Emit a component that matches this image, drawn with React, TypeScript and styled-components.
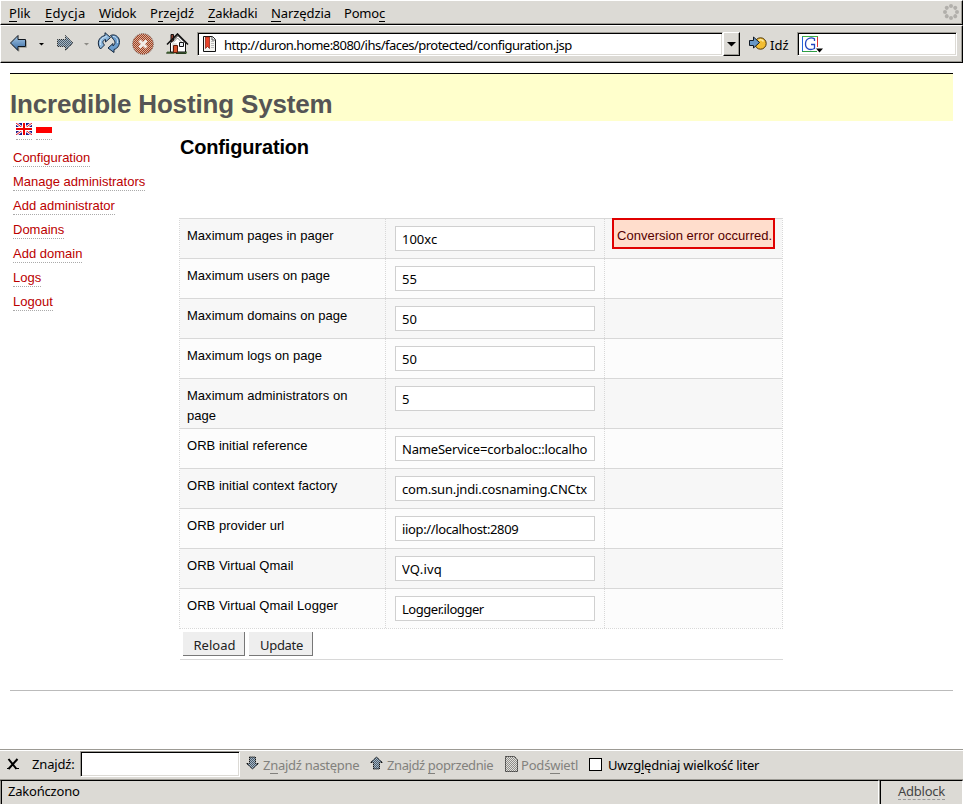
import React from 'react';
import styled, { createGlobalStyle, css } from 'styled-components';

const UI = '"Noto Sans", "Open Sans", sans-serif';
const WEB = '"Liberation Sans", Arial, sans-serif';
const FACE = '#dcdad5';
const SHADE = '#9c9a94';

const GlobalStyle = createGlobalStyle`
  *, *::before, *::after { box-sizing: border-box; }
  body { margin: 0; background: #fff; color: #000; }
  #root { height: 804px; }
  svg { display: block; flex: none; }
`;

const Window = styled.div`
  width: 963px;
  height: 804px;
  display: flex;
  flex-direction: column;
  overflow: hidden;
  font: 13px/18px ${UI};
  white-space: nowrap;
`;

const Label = styled.span<{ $track?: number }>`
  letter-spacing: ${(p) => p.$track ?? 0}px;
  white-space: pre;
`;

const Key = styled.span`
  box-shadow: 0 1px 0 currentColor;
  display: inline-block;
  height: 17px;
  line-height: 18px;
  vertical-align: top;
`;

const sunken = css`
  background: #fff;
  border: 1px solid;
  border-color: ${SHADE} #fff #fff ${SHADE};
  box-shadow: inset 1px 1px 0 #000, inset -1px -1px 0 ${FACE};
`;

/* Browser chrome, top */

const MenuBar = styled.div`
  height: 25px;
  flex: none;
  display: flex;
  padding: 3px 3px 0 8px;
  background: ${FACE};
  border: 1px solid;
  border-color: #fff #000 #000 #fff;
  box-shadow: inset -1px -1px 0 ${SHADE};
`;

const MenuItem = styled.div<{ $width: number }>`
  width: ${(p) => p.$width}px;
`;

const ThrobberSlot = styled.div`
  margin: 0 0 0 auto;
`;

const NavBar = styled.div`
  height: 38px;
  flex: none;
  display: flex;
  align-items: flex-start;
  padding-top: 6px;
  background: ${FACE};
  border: 1px solid;
  border-color: #fff #000 #000 #fff;
  box-shadow: inset -1px -1px 0 ${SHADE};
`;

const IconSlot = styled.div<{ $width: number; $top?: number; $left?: number }>`
  width: ${(p) => p.$width}px;
  flex: none;
  padding: ${(p) => p.$top ?? 0}px 0 0 ${(p) => p.$left ?? 0}px;
`;

const AddressField = styled.div`
  ${sunken}
  width: 526px;
  height: 24px;
  flex: none;
  display: flex;
  padding: 3px 0 0 5px;
  gap: 7px;
`;

const DropButton = styled.div`
  width: 17px;
  height: 24px;
  flex: none;
  background: ${FACE};
  border: 1px solid;
  border-color: #fff #000 #000 #fff;
  box-shadow: inset -1px -1px 0 ${SHADE};
  display: flex;
  align-items: center;
  justify-content: center;
`;

const GoButton = styled.div`
  width: 57px;
  flex: none;
  display: flex;
  gap: 3px;
  padding: 4px 0 0 9px;
`;

const SearchField = styled.div`
  ${sunken}
  width: 160px;
  height: 24px;
  padding: 3px 0 0 4px;
`;

/* Page */

const Page = styled.main`
  flex: 1;
  padding: 10px 10px 0;
  font: 13px/20px ${WEB};
`;

const Banner = styled.h1`
  margin: 0;
  height: 48px;
  padding-top: 15px;
  background: #ffc;
  border-top: 1px solid #000;
  color: #555;
  font: bold 26px/30px ${WEB};
  letter-spacing: -0.16px;
`;

const Columns = styled.div`
  display: flex;
  align-items: flex-start;
  height: 569px;
`;

const Sidebar = styled.nav`
  width: 169px;
  flex: none;
  padding: 2px 0 0 3px;
`;

const Flags = styled.div`
  display: flex;
  gap: 4px;
  padding-left: 3px;
  height: 20px;
`;

const FlagLink = styled.a`
  height: 17px;
  border-bottom: 1px dotted #aaa;
`;

const NavItem = styled.div`
  height: 24px;
  display: flex;
  align-items: flex-end;
`;

const NavLink = styled.a`
  height: 19px;
  line-height: 19px;
  color: #b00;
  border-bottom: 1px dotted #aaa;
`;

const Main = styled.section`
  width: 604px;
`;

const Title = styled.h2`
  margin: 0;
  padding: 14px 0 0 1px;
  height: 97px;
  font: bold 20px/24px ${WEB};
  letter-spacing: -0.17px;
`;

const Form = styled.div`
  border: dotted #d8d8d8;
  border-width: 0 1px 1px 1px;
`;

const Row = styled.div<{ $alt: boolean; $tall?: boolean }>`
  display: grid;
  grid-template-columns: 206px 219px 1fr;
  height: ${(p) => (p.$tall ? 50 : 40)}px;
  margin: 0 -1px;
  padding: 0 1px;
  border-top: 1px solid #d8d8d8;
  background: ${(p) => (p.$alt ? '#fcfcfc' : '#f7f7f7')};
  background-clip: content-box;
  white-space: normal;
`;

const Cell = styled.div<{ $kind: 'label' | 'field' | 'message' }>`
  ${(p) => p.$kind !== 'message' && 'border-right: 1px dotted #d8d8d8;'}
  padding: ${(p) => (p.$kind === 'label' ? '7px 20px 0 7px' : p.$kind === 'field' ? '7px 9px 0' : '0 0 0 7px')};
  letter-spacing: ${(p) => (p.$kind === 'label' ? 0.03 : 0)}px;
`;

const Field = styled.input<{ $track: number }>`
  display: block;
  width: 200px;
  height: 25px;
  border: 1px solid #d0d0d0;
  border-radius: 0;
  outline: 0;
  background: #fff;
  color: #000;
  padding: 1px 6px 0;
  font: 13px/18px ${UI};
  letter-spacing: ${(p) => p.$track}px;
`;

const ErrorBox = styled.div`
  width: 163px;
  height: 31px;
  margin-top: -1px;
  padding: 6px 0 0 3px;
  border: 2px solid #e00000;
  background: #fdc;
  color: #500;
  line-height: 20px;
  letter-spacing: 0.02px;
  white-space: nowrap;
`;

const Actions = styled.div`
  display: flex;
  gap: 4px;
  height: 31px;
  margin-left: 1px;
  padding: 3px 0 0 3px;
  border-bottom: 1px solid #d8d8d8;
`;

const ActionButton = styled.button<{ $width: number }>`
  width: ${(p) => p.$width}px;
  height: 24px;
  padding: 2px 0 0 2px;
  border: solid #777;
  border-width: 0 1px 1px 0;
  border-radius: 0;
  background: #eee;
  color: #222;
  font: 13px/18px ${UI};
`;

const FooterRule = styled.div`
  border-top: 1px solid #bbb;
`;

/* Browser chrome, bottom */

const FindBar = styled.div`
  height: 31px;
  flex: none;
  display: flex;
  border-top: 1px solid ${SHADE};
  border-bottom: 1px solid ${SHADE};
  background: ${FACE};
  box-shadow: inset 0 1px 0 #fff;
  padding-top: 1px;
`;

const FindLabel = styled.div`
  width: 48px;
  padding-top: 4px;
  letter-spacing: -0.15px;
`;

const FindField = styled.div`
  ${sunken}
  width: 160px;
  height: 26px;
  flex: none;
`;

const FindAction = styled.div<{ $width: number; $gap: number }>`
  width: ${(p) => p.$width}px;
  display: flex;
  flex: none;
  gap: ${(p) => p.$gap}px;
  padding-top: 5px;
  color: #82817d;
`;

const CheckBox = styled.div`
  width: 13px;
  height: 13px;
  margin: 7px 6px 0 0;
  border: 1px solid #000;
  background: #fff;
`;

const CheckLabel = styled.div`
  padding-top: 5px;
`;

const StatusBar = styled.div`
  height: 24px;
  flex: none;
  display: flex;
  background: ${FACE};
`;

const StatusPanel = styled.div<{ $width: number; $left: number }>`
  width: ${(p) => p.$width}px;
  padding: 1px 0 0 ${(p) => p.$left}px;
  border: solid;
  border-width: 1px 1px 0 1px;
  border-color: #000 #fff #fff ${SHADE};
  box-shadow: inset 1px 0 0 #000;
`;

const Adblock = styled.span`
  display: inline-block;
  height: 18px;
  line-height: 19px;
  color: #444;
  letter-spacing: -0.25px;
  border-bottom: 1px dashed #999;
`;

/* Icons */

const LEFT_ARROW = 'M0.5 8 8 0.5V4.5H15.5V11.5H8V15.5Z';
const RIGHT_ARROW = 'M16 8 8.5 0.5V4.5H0.5V11.5H8.5V15.5Z';

const BackIcon = () => (
  <svg width="18" height="17" viewBox="0 0 18 17">
    <defs>
      <linearGradient id="blue" x1="0" y1="0" x2="0" y2="1">
        <stop offset="0" stopColor="#a9cbe9" />
        <stop offset="1" stopColor="#3467a0" />
      </linearGradient>
      <pattern id="dither" width="2" height="2" patternUnits="userSpaceOnUse">
        <path d="M0 0h1v1h-1zM1 1h1v1h-1z" fill="#4a5c6c" />
      </pattern>
    </defs>
    <path d="M2 10l7 6.5v-4h7.500v-7" fill="none" stroke="#aaa89f" />
    <path d={LEFT_ARROW} fill="url(#blue)" stroke="#10161e" />
  </svg>
);

const ForwardIcon = () => (
  <svg width="18" height="17" viewBox="0 0 18 17">
    <path d={RIGHT_ARROW} fill="#a4b4c2" />
    <path d={RIGHT_ARROW} fill="url(#dither)" stroke="#222" strokeDasharray="1 1" />
  </svg>
);

const Caret = ({ color = '#000', w = 5 }: { color?: string; w?: number }) => (
  <svg width={w} height={Math.ceil(w / 2)} viewBox={`0 0 ${w} ${Math.ceil(w / 2)}`}>
    <path d={`M0 0H${w}L${w / 2} ${w / 2}Z`} fill={color} />
  </svg>
);

const ReloadIcon = () => (
  <svg width="24" height="23" viewBox="0 0 24 23">
    <path d="M3.500 17C-.5 12 1 5 8 3.500V.7L13.500 5.500 8.500 10V7.500C5.500 8.500 5 10.500 7.500 13Z" fill="#8eb8de" stroke="#13253b" strokeLinejoin="round" />
    <path d="M13.500 3.500C17 2 20.500 3.500 22 7 23.500 12 21 16.500 17 17.500V20.500L11 16 16 11.500V14C18.500 12 18.500 9.500 16.500 7.500Z" fill="#6b9ccc" stroke="#13253b" strokeLinejoin="round" />
    <path d="M3.500 13C2.500 9 4.500 5.500 9.500 4.500M16 4.500C19.500 4.500 21 8 20.500 11" fill="none" stroke="#d4e7f7" />
  </svg>
);

const StopIcon = () => (
  <svg width="22" height="22" viewBox="0 0 22 22">
    <defs>
      <pattern id="rust" width="2" height="2" patternUnits="userSpaceOnUse">
        <path d="M0 0h2v2H0z" fill="#d5b09f" />
        <path d="M0 0h1v1h-1zM1 1h1v1h-1z" fill="#a5401f" />
      </pattern>
    </defs>
    <circle cx="11" cy="11" r="10.300" fill="url(#rust)" stroke="#6d4438" strokeDasharray="1 1" />
    <path d="M7.500 7.500l7 7M14.500 7.500l-7 7" stroke="#f2ece8" strokeWidth="3" />
  </svg>
);

const HomeIcon = () => (
  <svg width="24" height="22" viewBox="0 0 24 22">
    <path d="M1 18.500h20v2H1z" fill="#557a45" />
    <path d="M0 20h8M10 20.500h10" stroke="#253b1d" />
    <path d="M4.500 10v9h15v-9L12 2.500Z" fill="#fff" stroke="#111" />
    <path d="M6 11h5M6 13h2M6 15h2M6 17h1" stroke="#c3c3bd" />
    <path d="M5 1.500h2.500v6L5 9Z" fill="#9a4030" stroke="#111" />
    <path d="M1 11.500 11.500 1 22 11.500" fill="none" stroke="#111" strokeWidth="1.600" />
    <path d="M7 9.500 11.500 5l4.500 4.500" fill="none" stroke="#8c8c88" />
    <path d="M13.500 9.500h4v4h-4z" fill="#e8edf2" stroke="#111" />
    <path d="M7.500 12.500h4v7h-4z" fill="#d8532d" stroke="#5a1c0c" />
  </svg>
);

const PageIcon = () => (
  <svg width="14" height="16" viewBox="0 0 14 16">
    <path d="M.5.500h9l3 3v12H.5z" fill="#f4f4f1" stroke="#111" />
    <path d="M9 .500v3.500h3.500" fill="#fff" stroke="#555" />
    <path d="M8 5.500h3M8 7.500h3M8 9.500h3M8 11.500h3" stroke="#bbb" />
    <path d="M2.500 1h4v11.500l-2-2-2 2z" fill="#e8432a" stroke="#801c10" strokeWidth=".7" />
  </svg>
);

const GoIcon = () => (
  <svg width="18" height="15" viewBox="0 0 18 15">
    <circle cx="11.500" cy="7.500" r="5.700" fill="#f2bd31" stroke="#4d3506" />
    <path d="M9.500 4.500q3-2 5 1" fill="none" stroke="#fdeaa0" strokeWidth="1.500" />
    <path d="M.5 4.500h4v-3.500l6 5.500-6 5.500V9.500h-4z" fill="#6897c6" stroke="#101824" />
  </svg>
);

const SearchIcon = () => (
  <svg width="22" height="18" viewBox="0 0 22 18">
    <path d="M.5 16V.500" stroke="#2465d8" />
    <path d="M0 .500h16" stroke="#43b548" />
    <path d="M15.500 1v10" stroke="#d33" />
    <path d="M0 15.500h15" stroke="#2f9e44" />
    <path d="M12.500 5V2.800C9 1 3.500 2 3.500 8c0 5.500 5 6.500 9 4.500V8.500H9" fill="none" stroke="#2346c0" strokeWidth="1.300" />
    <path d="M14 12.500h7l-3.500 4z" fill="#000" />
  </svg>
);

const Throbber = () => (
  <svg width="16" height="16" viewBox="0 0 16 16" fill="#b1afab">
    {[0, 1, 2, 3, 4, 5, 6, 7].map((i) => (
      <circle key={i} cx="8" cy="2" r="2" transform={`rotate(${i * 45} 8 8)`} />
    ))}
  </svg>
);

const BritishFlag = () => (
  <svg width="16" height="12" viewBox="0 0 16 12">
    <path d="M0 0h16v12H0z" fill="#1b1b8c" />
    <path d="M0 0l16 12M16 0L0 12" stroke="#fff" strokeWidth="2.600" />
    <path d="M0 0l16 12M16 0L0 12" stroke="#e01020" strokeWidth="1" />
    <path d="M8 0v12M0 6h16" stroke="#fff" strokeWidth="4" />
    <path d="M8 0v12M0 6h16" stroke="#f00000" strokeWidth="2" />
  </svg>
);

const PolishFlag = () => (
  <svg width="16" height="12" viewBox="0 0 16 12" shapeRendering="crispEdges">
    <path d="M0 0h16v4H0z" fill="#fff" />
    <path d="M0 4h16v6H0z" fill="#f00" />
  </svg>
);

const CloseIcon = () => (
  <svg width="12" height="12" viewBox="0 0 12 12">
    <path d="M1.500 1l8 10M10.500 1l-9 10" stroke="#000" strokeWidth="2" />
    <path d="M0 10.500h3M8 10.500h4" stroke="#000" />
  </svg>
);

const FindArrow = ({ up = false }: { up?: boolean }) => (
  <svg width="13" height="14" viewBox="0 0 13 14">
    <g transform={up ? 'translate(0 14) scale(1 -1)' : undefined}>
      <path d="M3.500 1h6v6.500h3l-6 5.500-6-5.500h3z" fill="#a6b7c7" />
      <path d="M3.500 1h6v6.500h3l-6 5.500-6-5.500h3z" fill="url(#dither)" stroke="#111" strokeDasharray="1.300 .7" />
    </g>
  </svg>
);

const HighlightIcon = () => (
  <svg width="14" height="16" viewBox="0 0 14 16">
    <defs>
      <pattern id="grey" width="2" height="2" patternUnits="userSpaceOnUse">
        <path d="M0 0h2v2H0z" fill="#e2e1dd" />
        <path d="M0 0h1v1h-1zM1 1h1v1h-1z" fill="#8e8d89" />
      </pattern>
    </defs>
    <path d="M.5.500h9l3 3v12H.5z" fill="url(#grey)" stroke="#222" strokeDasharray="1.300 .7" />
  </svg>
);

/* Data */

/* The underlined access key is the first letter of `key`. */
const MENU: { before?: string; key: string; after: string; width: number; track?: number }[] = [
  { key: 'P', after: 'lik', width: 36 },
  { key: 'E', after: 'dycja', width: 54, track: 0.3 },
  { key: 'W', after: 'idok', width: 51, track: -0.2 },
  { before: 'P', key: 'r', after: 'zejdź', width: 58 },
  { key: 'Z', after: 'akładki', width: 63, track: -0.15 },
  { key: 'N', after: 'arzędzia', width: 73, track: -0.1 },
  { before: 'Pomo', key: 'c', after: '', width: 60, track: -0.2 },
];

const LINKS = ['Configuration', 'Manage administrators', 'Add administrator', 'Domains', 'Add domain', 'Logs', 'Logout'];

const FIELDS: { label: string; value: string; track?: number; error?: string; tall?: boolean }[] = [
  { label: 'Maximum pages in pager', value: '100xc', error: 'Conversion error occurred.' },
  { label: 'Maximum users on page', value: '55' },
  { label: 'Maximum domains on page', value: '50' },
  { label: 'Maximum logs on page', value: '50' },
  { label: 'Maximum administrators on page', value: '5', tall: true },
  { label: 'ORB initial reference', value: 'NameService=corbaloc::localho', track: -0.19 },
  { label: 'ORB initial context factory', value: 'com.sun.jndi.cosnaming.CNCtx', track: -0.17 },
  { label: 'ORB provider url', value: 'iiop://localhost:2809', track: -0.36 },
  { label: 'ORB Virtual Qmail', value: 'VQ.ivq', track: 0.2 },
  { label: 'ORB Virtual Qmail Logger', value: 'Logger.ilogger', track: -0.45 },
];

export default function App() {
  return (
    <Window>
      <GlobalStyle />
      <MenuBar>
        {MENU.map((m) => (
          <MenuItem key={m.key} $width={m.width}>
            <Label $track={m.track}>
              {m.before}
              <Key>{m.key}</Key>
              {m.after}
            </Label>
          </MenuItem>
        ))}
        <ThrobberSlot>
          <Throbber />
        </ThrobberSlot>
      </MenuBar>
      <NavBar>
        <IconSlot $width={37} $left={9} $top={3}><BackIcon /></IconSlot>
        <IconSlot $width={18} $left={1} $top={11}><Caret /></IconSlot>
        <IconSlot $width={27} $left={1} $top={3}><ForwardIcon /></IconSlot>
        <IconSlot $width={13} $left={1} $top={11}><Caret color="#8c8a85" /></IconSlot>
        <IconSlot $width={35} $left={1}><ReloadIcon /></IconSlot>
        <IconSlot $width={34} $left={1} $top={1}><StopIcon /></IconSlot>
        <IconSlot $width={32} $left={1} $top={1}><HomeIcon /></IconSlot>
        <AddressField>
          <PageIcon />
          <Label $track={-0.52}>http://duron.home:8080/ihs/faces/protected/configuration.jsp</Label>
        </AddressField>
        <DropButton><Caret w={9} /></DropButton>
        <GoButton>
          <GoIcon />
          <Label>Idź</Label>
        </GoButton>
        <SearchField><SearchIcon /></SearchField>
      </NavBar>

      <Page>
        <Banner>Incredible Hosting System</Banner>
        <Columns>
          <Sidebar>
            <Flags>
              <FlagLink><BritishFlag /></FlagLink>
              <FlagLink><PolishFlag /></FlagLink>
            </Flags>
            <div>
              {LINKS.map((text) => (
                <NavItem key={text}><NavLink>{text}</NavLink></NavItem>
              ))}
            </div>
          </Sidebar>
          <Main>
            <Title>Configuration</Title>
            <Form>
              {FIELDS.map((f, i) => (
                <Row key={f.label} $alt={i % 2 === 1} $tall={f.tall}>
                  <Cell $kind="label">{f.label}</Cell>
                  <Cell $kind="field"><Field $track={f.track ?? 0} defaultValue={f.value} /></Cell>
                  <Cell $kind="message">{f.error && <ErrorBox>{f.error}</ErrorBox>}</Cell>
                </Row>
              ))}
            </Form>
            <Actions>
              <ActionButton $width={62}>Reload</ActionButton>
              <ActionButton $width={64}><Label $track={-0.3}>Update</Label></ActionButton>
            </Actions>
          </Main>
        </Columns>
        <FooterRule />
      </Page>

      <FindBar>
        <IconSlot $width={32} $left={7} $top={7}><CloseIcon /></IconSlot>
        <FindLabel>Znajdź:</FindLabel>
        <FindField />
        <IconSlot $width={6} />
        <FindAction $width={124} $gap={4}>
          <FindArrow />
          <Label $track={-0.28}>Z<Key>n</Key>ajdź następne</Label>
        </FindAction>
        <FindAction $width={135} $gap={4}>
          <FindArrow up />
          <Label $track={-0.4}>Znajdź <Key>p</Key>oprzednie</Label>
        </FindAction>
        <FindAction $width={84} $gap={2}>
          <HighlightIcon />
          <Label $track={-0.2}>Podś<Key>w</Key>ietl</Label>
        </FindAction>
        <CheckBox />
        <CheckLabel>
          <Label $track={-0.22}>Uwzg<Key>l</Key>ędniaj wielkość liter</Label>
        </CheckLabel>
      </FindBar>
      <StatusBar>
        <StatusPanel $width={879} $left={7}><Label $track={-0.2}>Zakończono</Label></StatusPanel>
        <StatusPanel $width={84} $left={18}><Adblock>Adblock</Adblock></StatusPanel>
      </StatusBar>
    </Window>
  );
}
